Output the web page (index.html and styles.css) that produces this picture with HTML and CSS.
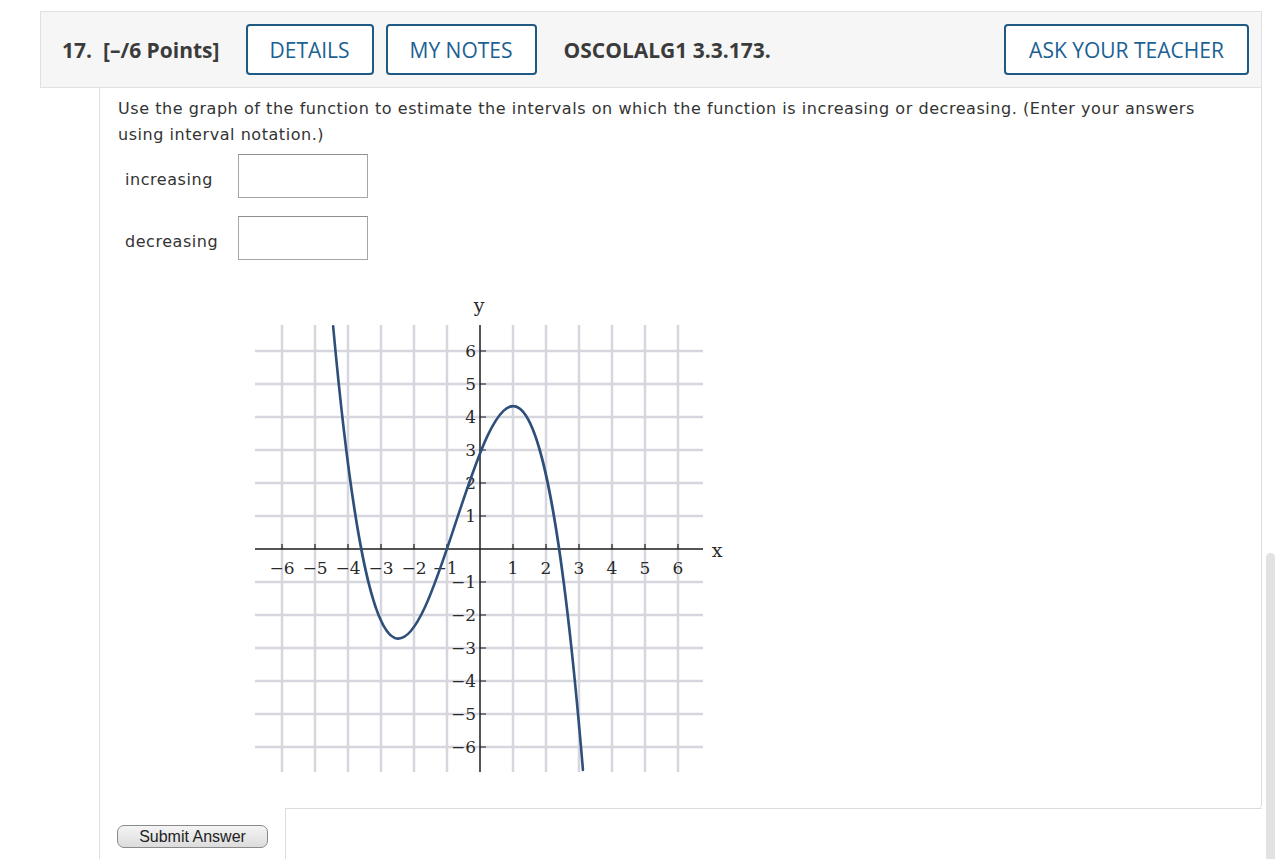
FILE: index.html
```html
<!DOCTYPE html>
<html lang="en">
<head>
<meta charset="utf-8">
<title>Question 17</title>
<link rel="stylesheet" href="styles.css">
</head>
<body>
<div class="wrap">
  <div class="qhead">
    <span class="qnum">17.</span>
    <span class="qpts">[–/6 Points]</span>
    <button class="hbtn btn-details">DETAILS</button>
    <button class="hbtn btn-notes">MY NOTES</button>
    <span class="qcode">OSCOLALG1 3.3.173.</span>
    <button class="hbtn btn-ask">ASK YOUR TEACHER</button>
  </div>
  <div class="panel">
    <div class="qbody">
      <p class="prompt">Use the graph of the function to estimate the intervals on which the function is increasing or decreasing. (Enter your answers using interval notation.)</p>
      <div class="answers">
        <div class="arow"><span class="alabel">increasing</span><input class="abox" type="text"></div>
        <div class="arow"><span class="alabel">decreasing</span><input class="abox" type="text"></div>
      </div>
      <div class="graph">
        <svg class="plot" width="480" height="490" viewBox="0 0 480 490" xmlns="http://www.w3.org/2000/svg">
          <path class="grid" d="M32 35V482M65 35V482M98 35V482M131 35V482M164 35V482M197 35V482M263 35V482M296 35V482M329 35V482M362 35V482M395 35V482M428 35V482M5 61H453M5 94H453M5 127H453M5 160H453M5 193H453M5 226H453M5 292H453M5 325H453M5 358H453M5 391H453M5 424H453M5 457H453"/>
          <path class="axis" d="M230 35V482M5 259H453"/>
          <path class="tick" d="M32 254V259M65 254V259M98 254V259M131 254V259M164 254V259M197 254V259M263 254V259M296 254V259M329 254V259M362 254V259M395 254V259M428 254V259M230 61H236M230 94H236M230 127H236M230 160H236M230 193H236M230 226H236M230 292H236M230 325H236M230 358H236M230 391H236M230 424H236M230 457H236"/>
          <g class="lbl xl">
            <text x="32" y="284">−6</text><text x="65" y="284">−5</text><text x="98" y="284">−4</text><text x="131" y="284">−3</text><text x="164" y="284">−2</text><text x="195" y="284">−1</text>
            <text x="263" y="284">1</text><text x="296" y="284">2</text><text x="329" y="284">3</text><text x="362" y="284">4</text><text x="395" y="284">5</text><text x="428" y="284">6</text>
          </g>
          <g class="lbl yl">
            <text x="226" y="67">6</text><text x="226" y="100">5</text><text x="226" y="133">4</text><text x="226" y="166">3</text><text x="226" y="199">2</text><text x="226" y="232">1</text>
            <text x="226" y="298">−1</text><text x="226" y="331">−2</text><text x="226" y="364">−3</text><text x="226" y="397">−4</text><text x="226" y="430">−5</text><text x="226" y="463">−6</text>
          </g>
          <text class="lbl varl" x="229" y="22">y</text>
          <text class="lbl varl" x="467" y="267">x</text>
          <path class="curve" d="M83.15 36.28C166.42 942.43 249.69 -512.94 332.96 480.03"/>
        </svg>
      </div>
    </div>
    <div class="footer">
      <div class="fleft"><button class="submit">Submit Answer</button></div>
      <div class="fright"></div>
    </div>
  </div>
</div>
<div class="scrollthumb"></div>
</body>
</html>
```

FILE: styles.css
```css
html, body {
  margin: 0;
  padding: 0;
  background: #ffffff;
  overflow: hidden;
}

.wrap {
  padding: 11px 22px 0 40px;
}

.qhead {
  display: flex;
  align-items: center;
  height: 75px;
  background: #f6f6f6;
  border: 1px solid #e1e1e1;
  padding: 0 12px 0 21px;
  font-family: "Open Sans", "Liberation Sans", sans-serif;
  font-size: 21px;
  color: #3b3b3b;
}

.qnum {
  font-weight: 700;
  margin-right: 11px;
}

.qpts {
  font-weight: 700;
  margin-right: 26px;
}

.qcode {
  font-weight: 700;
  margin-left: 27px;
  flex: 1;
}

.hbtn {
  height: 51px;
  box-sizing: border-box;
  border: 2px solid #1f5a84;
  border-radius: 4px;
  background: #ffffff;
  color: #1b6193;
  font-family: "Open Sans", "Liberation Sans", sans-serif;
  font-size: 21px;
  font-weight: 500;
  padding: 0;
  cursor: pointer;
}

.btn-details { width: 128px; }
.btn-notes { width: 151px; margin-left: 12px; }
.btn-ask { width: 245px; }

.panel {
  margin-left: 59px;
  border-left: 1px solid #e0e0e0;
}

.qbody {
  border-right: 1px solid #dcdcdc;
  border-bottom-right-radius: 4px;
  padding: 8px 0 28px 18px;
  font-family: "DejaVu Sans", Verdana, sans-serif;
  font-size: 16px;
  letter-spacing: 0.55px;
  color: #333333;
}

.prompt {
  margin: 0;
  line-height: 26px;
  padding-right: 40px;
}

.answers {
  display: flex;
  flex-direction: column;
  gap: 18px;
  margin-top: 6px;
}

.arow {
  display: flex;
  align-items: center;
}

.alabel {
  width: 113px;
  padding-left: 7px;
  padding-top: 6px;
}

.abox {
  width: 130px;
  height: 44px;
  box-sizing: border-box;
  border: 1px solid #a6a6a6;
  border-top-color: #8f8f8f;
  margin: 0;
  background: #ffffff;
}

.graph {
  margin-top: 30px;
  margin-left: 132px;
  height: 490px;
}

.plot {
  display: block;
  letter-spacing: 0;
}

.grid {
  stroke: #d6d6de;
  stroke-width: 2.5;
  fill: none;
}

.axis {
  stroke: #1e1e1e;
  stroke-width: 1.5;
  fill: none;
}

.tick {
  stroke: #1e1e1e;
  stroke-width: 1.2;
  fill: none;
}

.lbl {
  font-family: "DejaVu Serif", "Liberation Serif", serif;
  font-size: 17px;
  fill: #2a2a2a;
}

.xl text { text-anchor: middle; }
.yl text { text-anchor: end; }

.varl {
  font-size: 19px;
  text-anchor: middle;
}

.curve {
  stroke: #2d4f7a;
  stroke-width: 2.6;
  fill: none;
  stroke-linecap: round;
}

.footer {
  display: flex;
  height: 60px;
}

.fleft {
  width: 168px;
  padding: 17px 0 0 17px;
}

.fright {
  flex: 1;
  border-top: 1px solid #dcdcdc;
  border-left: 1px solid #dcdcdc;
  border-right: 1px solid transparent;
}

.submit {
  width: 151px;
  height: 23px;
  box-sizing: border-box;
  border: 1px solid #8a8a8a;
  border-radius: 7px;
  background: linear-gradient(#f4f4f4, #dcdcdc);
  font-family: "Liberation Sans", Arial, sans-serif;
  font-size: 16px;
  color: #222222;
  padding: 0;
  line-height: 20px;
}

.scrollthumb {
  position: fixed;
  left: 1266px;
  top: 553px;
  width: 9px;
  height: 320px;
  background: #e2e2e2;
  border-radius: 5px;
}
```
